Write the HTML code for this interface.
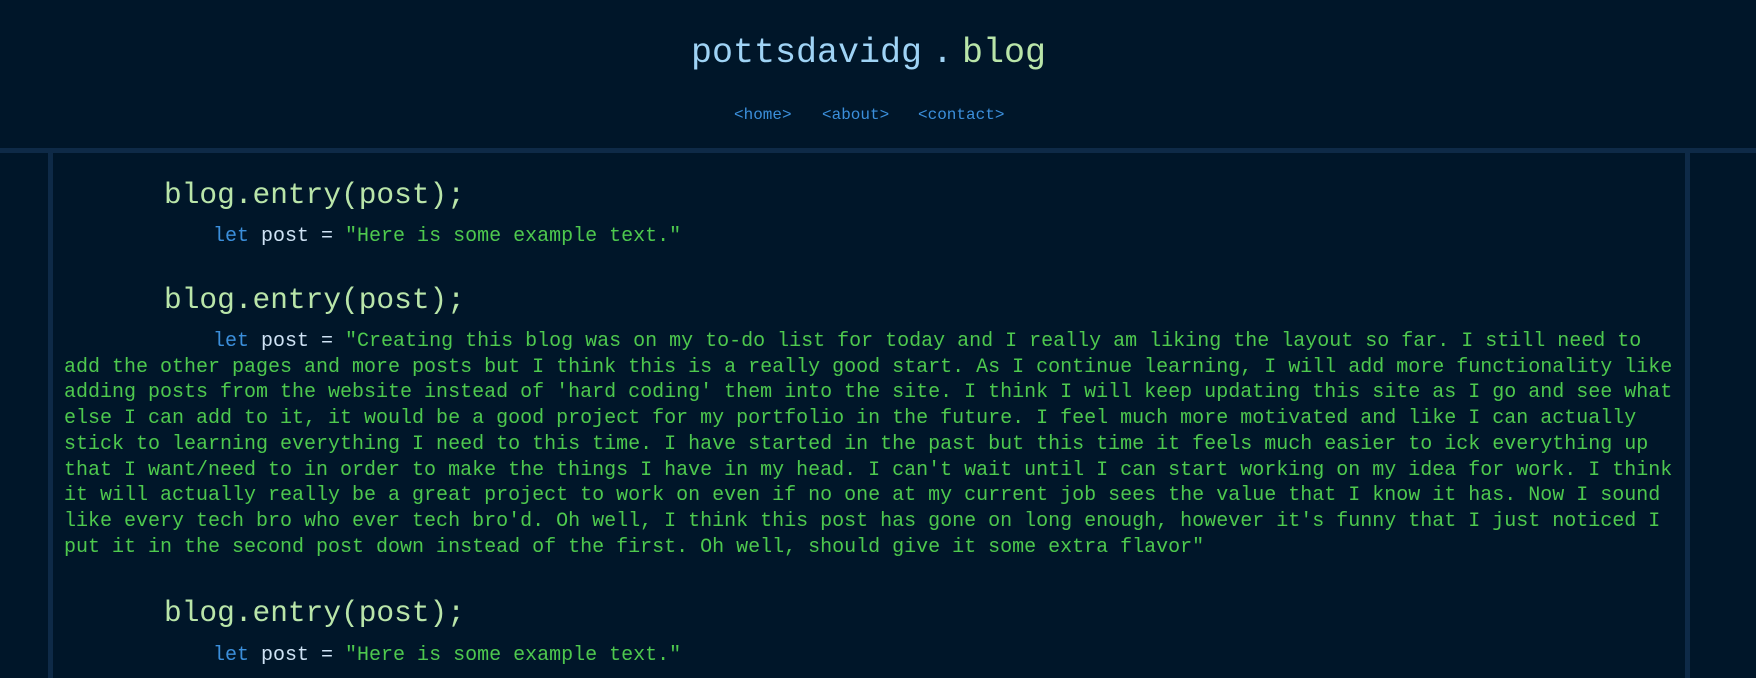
<!DOCTYPE html>
<html><head><meta charset="utf-8"><style>
html,body{margin:0;padding:0;}
body{width:1756px;height:678px;background:#001629;position:relative;overflow:hidden;font-family:"Liberation Mono","DejaVu Sans Mono",monospace;}
.a{position:absolute;white-space:pre;}
.bar{position:absolute;left:0;top:148px;width:1756px;height:5px;background:#0e2a47;}
.side{position:absolute;top:153px;width:5px;height:525px;background:#0e2a47;}
.t{font-size:35px;line-height:40px;top:33px;}
.nav{font-size:16px;line-height:20px;top:105px;color:#3b8fdb;}
.h{font-size:29.5px;line-height:36px;color:#b9e5a9;left:164px;}
.p{font-size:20px;line-height:25.7px;color:#4ec94e;left:64px;}
.k{color:#3b8fdb}.v{color:#cfe3f5}
.ind{display:inline-block;width:149px;}
</style></head><body>
<div class="a t" style="left:691px;color:#9fd3f5">pottsdavidg</div>
<div class="a t" style="left:932px;color:#9fd3f5">.</div>
<div class="a t" style="left:962px;color:#b9e5a9">blog</div>
<div class="a nav" style="left:734px">&lt;home&gt;</div>
<div class="a nav" style="left:822px">&lt;about&gt;</div>
<div class="a nav" style="left:918px">&lt;contact&gt;</div>
<div class="bar"></div>
<div class="side" style="left:48px"></div>
<div class="side" style="left:1685px"></div>

<div class="a h" style="top:177px">blog.entry(post);</div>
<div class="a p" style="top:224px;left:213px"><span class="k">let</span> <span class="v">post =</span> "Here is some example text."</div>

<div class="a h" style="top:282px">blog.entry(post);</div>
<div class="a p" style="top:329px"><span class="ind"></span><span class="k">let</span> <span class="v">post =</span> "Creating this blog was on my to-do list for today and I really am liking the layout so far. I still need to
add the other pages and more posts but I think this is a really good start. As I continue learning, I will add more functionality like
adding posts from the website instead of 'hard coding' them into the site. I think I will keep updating this site as I go and see what
else I can add to it, it would be a good project for my portfolio in the future. I feel much more motivated and like I can actually
stick to learning everything I need to this time. I have started in the past but this time it feels much easier to ick everything up
that I want/need to in order to make the things I have in my head. I can't wait until I can start working on my idea for work. I think
it will actually really be a great project to work on even if no one at my current job sees the value that I know it has. Now I sound
like every tech bro who ever tech bro'd. Oh well, I think this post has gone on long enough, however it's funny that I just noticed I
put it in the second post down instead of the first. Oh well, should give it some extra flavor"</div>

<div class="a h" style="top:595px">blog.entry(post);</div>
<div class="a p" style="top:643px;left:213px"><span class="k">let</span> <span class="v">post =</span> "Here is some example text."</div>
</body></html>
